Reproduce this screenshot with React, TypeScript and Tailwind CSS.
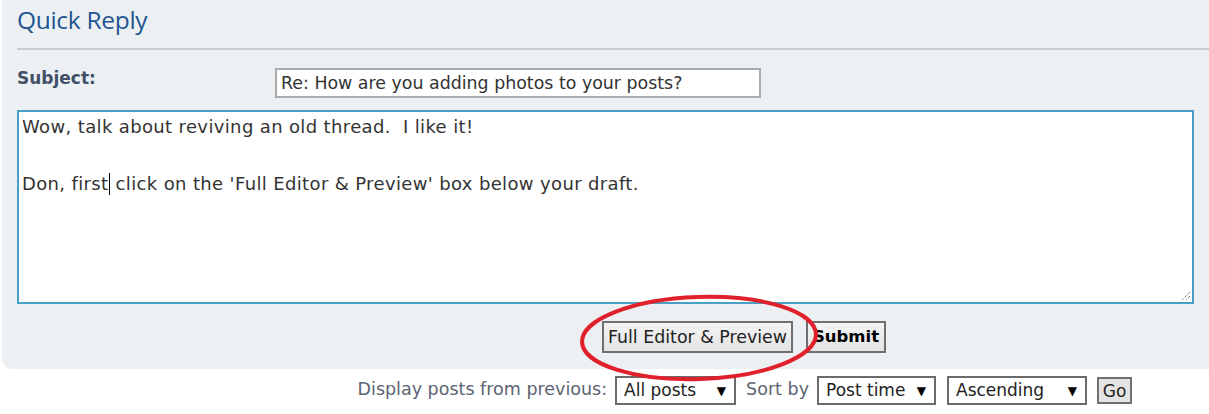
import React from 'react';

const verdana = "font-['DejaVu_Sans','Liberation_Sans',sans-serif]";

const FakeSelect: React.FC<{ label: string; width: string }> = ({ label, width }) => (
  <div
    className={`${width} h-[29px] border-2 border-[#6b6b6b] bg-white flex items-center justify-between pl-[7px] pr-[8px] text-[17px] text-[#222]`}
  >
    <span>{label}</span>
    <span className="text-[12px] text-black">▼</span>
  </div>
);

export default function App() {
  return (
    <div className={`relative w-[1209px] h-[414px] bg-white overflow-hidden ${verdana}`}>
      {/* Quick reply panel */}
      <div className="ml-[2px] bg-[#ecf0f3] rounded-bl-[10px] pl-[15px] pb-[16px]">
        <div className="h-[48px] flex items-center pb-[7px]">
          <h2 className="text-[24.5px] text-[#1f5590] font-['Open_Sans',sans-serif] tracking-[-0.3px]">Quick Reply</h2>
        </div>
        <div className="h-[2px] bg-[#c9cdd1]" />

        <div className="mt-[18px] h-[30px] flex items-center">
          <label className="w-[258px] text-[17px] font-bold text-[#425067] -mt-[8px]">Subject:</label>
          <div className="w-[486px] h-[30px] border-2 border-[#a9abad] bg-white flex items-center pl-[4px] text-[17.4px] text-[#333]">
            Re: How are you adding photos to your posts?
          </div>
        </div>

        <div className="relative mt-[12px] w-[1177px] h-[194px] border-2 border-[#4a9fc6] bg-white pl-[3px] pt-[1px] text-[18px] tracking-[0.36px] leading-[28.5px] text-[#333]">
          <p>Wow, talk about reviving an old thread.&nbsp; I like it!</p>
          <p>&nbsp;</p>
          <p>
            Don, first
            <span className="inline-block w-px h-[22px] bg-black align-middle -mt-[2px]" />
            {' '}click on the 'Full Editor &amp; Preview' box below your draft.
          </p>
          <svg className="absolute right-[1px] bottom-[1px]" width="11" height="11" viewBox="0 0 11 11">
            <path d="M10 2 L2 10 M10 6 L6 10" stroke="#555" strokeWidth="1" strokeDasharray="1 1" />
          </svg>
        </div>

        <div className="mt-[17px] pl-[585px] flex gap-[13px]">
          <button className="h-[32px] w-[191px] border-2 border-[#707070] bg-gradient-to-b from-[#f4f4f4] to-[#e4e4e4] text-[17.4px] text-[#222]">
            Full Editor &amp; Preview
          </button>
          <button className="h-[32px] w-[80px] border-2 border-[#707070] bg-gradient-to-b from-[#f4f4f4] to-[#e4e4e4] text-[16.5px] font-bold text-black">
            Submit
          </button>
        </div>
      </div>

      {/* Sort / display options */}
      <div className="mt-[7px] flex items-center justify-end pr-[77px] text-[17.5px]">
        <span className="text-[#5b6472] mr-[8px] -mt-[3px]">Display posts from previous:</span>
        <FakeSelect label="All posts" width="w-[121px]" />
        <span className="text-[#5b6472] ml-[10px] mr-[8px] -mt-[3px]">Sort by</span>
        <FakeSelect label="Post time" width="w-[119px]" />
        <div className="w-[11px]" />
        <FakeSelect label="Ascending" width="w-[140px]" />
        <button className="ml-[10px] h-[27px] w-[35px] border-2 border-[#707070] bg-[#e4e4e4] text-[17px] text-[#222]">
          Go
        </button>
      </div>

      {/* Red annotation circle */}
      <svg className="absolute left-[578px] top-[293px] pointer-events-none" width="252" height="90" viewBox="0 0 252 90">
        <ellipse cx="121" cy="45" rx="117" ry="41" fill="none" stroke="#e0202b" strokeWidth="4" transform="rotate(-2 121 45)" />
      </svg>
    </div>
  );
}
